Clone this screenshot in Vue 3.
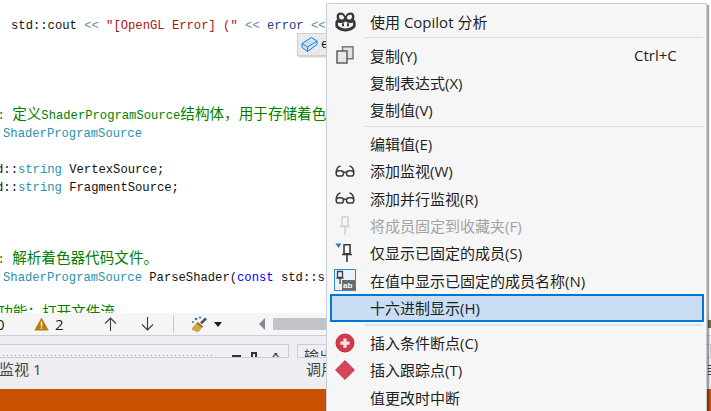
<script setup>
const code = [
  { top: 0, cls: 'lead', parts: [['std::cout ', ''], ['<< ', 'op'], ['"[OpenGL Error] ("', 'str'], [' ', ''], ['<< ', 'op'], ['error', 'var'], [' ', ''], ['<<', 'op']] },
  { gap: 4, cls: 'colon', parts: [[': ', 'com'], ['定义', 'com cjk'], ['ShaderProgramSource', 'com'], ['结构体，用于存储着色', 'com cjk']] },
  { cls: 'type', parts: [['ShaderProgramSource', 'ty']] },
  { gap: 1, cls: 'std', parts: [['std::', ''], ['string', 'ty'], [' VertexSource;', '']] },
  { cls: 'std', parts: [['std::', ''], ['string', 'ty'], [' FragmentSource;', '']] },
  { gap: 3, cls: 'colon', parts: [[': ', 'com'], ['解析着色器代码文件。', 'com cjk']] },
  { cls: 'type', parts: [['ShaderProgramSource', 'ty'], [' ParseShader(', ''], ['const', 'kw'], [' std::s', '']] },
  { gap: 1, cls: 'func', parts: [['功能：打开文件流', 'com cjk']] }
]

const menu = [
  { t: '使用 Copilot 分析', i: 'copilot' },
  { sep: true },
  { t: '复制(Y)', i: 'copy', k: 'Ctrl+C' },
  { t: '复制表达式(X)' },
  { t: '复制值(V)' },
  { sep: true },
  { t: '编辑值(E)' },
  { t: '添加监视(W)', i: 'glasses' },
  { t: '添加并行监视(R)', i: 'glasses' },
  { t: '将成员固定到收藏夹(F)', i: 'pin', off: true },
  { t: '仅显示已固定的成员(S)', i: 'pinfilter' },
  { t: '在值中显示已固定的成员名称(N)', i: 'pinab' },
  { t: '十六进制显示(H)', on: true },
  { sep: true, wide: true },
  { t: '插入条件断点(C)', i: 'bpcond' },
  { t: '插入跟踪点(T)', i: 'bptrace' },
  { t: '值更改时中断' }
]
</script>

<template>
  <div class="root">
    <div class="editor">
      <div
        v-for="(line, n) in code"
        :key="n"
        class="line"
        :class="[line.cls, line.gap ? 'gap' + line.gap : '']"
      >
        <span v-for="(p, m) in line.parts" :key="m" :class="p[1]">{{ p[0] }}</span>
      </div>
    </div>

    <div class="toolbar">
      <span class="num zero">0</span>
      <svg class="warn" width="15" height="14" viewBox="0 0 15 14">
        <path d="M7.5 .5 14.8 13.5H.2Z" fill="#b57f0c" />
        <path d="M6.8 4.5h1.4v5H6.8zM6.8 10.4h1.4v1.5H6.8z" fill="#fff" />
      </svg>
      <span class="num">2</span>
      <svg class="up" width="13" height="14" viewBox="0 0 13 14" fill="none" stroke="#3c3c3c" stroke-width="1.1">
        <path d="M6.5 14V1M1 6.5 6.5 1 12 6.5" />
      </svg>
      <svg class="down" width="13" height="14" viewBox="0 0 13 14" fill="none" stroke="#3c3c3c" stroke-width="1.1">
        <path d="M6.5 0V13M1 7.5 6.5 13 12 7.5" />
      </svg>
      <span class="divider"></span>
      <svg class="broom" width="18" height="17" viewBox="0 0 18 17">
        <path d="M9 6.5 14 1.5l2 1.8-5 5Z" fill="#555" />
        <path d="M6.5 6 12 10.5 8.5 15 6 16.5 5 15l-1 .8L2.5 14l-.8.6L.6 13l1.6-2.5Z" fill="#d0a848" />
        <path d="M6.5 6 12 10.5l-1 1.2L5.6 7.2Z" fill="#8a6a20" />
        <circle cx="5" cy="3" r="1.3" fill="#1e7ec8" />
        <circle cx="9" cy="1.6" r="1.1" fill="#1e7ec8" />
        <circle cx="2" cy="6" r="1" fill="#1e7ec8" />
      </svg>
      <span class="caret"></span>
      <span class="scroll-arrow"></span>
      <span class="thumb"></span>
      <span class="far-mark"></span>
    </div>

    <div class="panels">
      <div class="pane-row">
        <div class="pane first">
          <span class="dots"></span>
          <span class="win-btn min"></span>
          <span class="win-btn pin-btn"></span>
          <span class="win-x">✕</span>
        </div>
        <div class="pane second"><span class="pane-title">输出</span></div>
      </div>
      <div class="tab-row">
        <span class="tab watch">监视 1</span>
        <span class="tab stack">调用</span>
        <span class="far-lines"></span>
      </div>
    </div>

    <div class="status"></div>

    <div class="chip">
      <svg width="17" height="17" viewBox="0 0 17 17" fill="#cfe3f5" stroke="#1e7ec8" stroke-width="1" stroke-linejoin="round">
        <path d="M1 7.5 10.5 1.5 16 5v3.5L6.5 15.5 1 11.5Z" />
        <path d="M1 7.5 6.500 11 16 5M6.500 11v4.500" fill="none" />
      </svg>
      <span class="chip-text">e</span>
    </div>

    <div class="menu">
      <template v-for="(item, n) in menu" :key="n">
        <div v-if="item.sep" class="sep" :class="{ wide: item.wide }"></div>
        <div v-else class="row" :class="{ off: item.off, on: item.on }">
          <span class="ico">
            <svg v-if="item.i === 'copilot'" width="21" height="20" viewBox="0 0 21 20">
              <path d="M10.5 4.2C9.4 1.6 7.6.6 5.4.6 2.8.6 1.600 2.400 1.600 4.800c0 1 .2 1.800.6 2.500C1 8.200.4 9.400.4 11v3.300C.4 16 4.800 19.400 10.500 19.400S20.600 16 20.600 14.300V11c0-1.600-.6-2.800-1.800-3.700.4-.7.6-1.500.6-2.500 0-2.400-1.200-4.200-3.800-4.200-2.200 0-4 1-5.100 3.600Z" fill="#383838" />
              <path d="M4 4.300c0-1 .6-1.600 1.800-1.600 1.600 0 3 .8 3.200 3 .1 1-.8 1.900-2.600 1.900C4.800 7.600 4 6.300 4 4.300ZM17 4.300c0-1-.6-1.600-1.800-1.600-1.600 0-3 .8-3.200 3-.1 1 .8 1.900 2.600 1.900 1.600 0 2.400-1.300 2.400-3.300Z" fill="#f6f6f6" />
              <path d="M3 10.500c2.500 1 5 .6 7.500-1 2.500 1.600 5 2 7.500 1v3c-2 2-4.500 3-7.500 3s-5.500-1-7.500-3Z" fill="#f6f6f6" />
              <rect x="7" y="11" width="2" height="3.500" rx="1" fill="#383838" />
              <rect x="12" y="11" width="2" height="3.500" rx="1" fill="#383838" />
            </svg>
            <svg v-else-if="item.i === 'copy'" width="18" height="18" viewBox="0 0 18 18" stroke-width="1.500">
              <rect x="6.500" y=".8" width="10.500" height="12" fill="#e2e2e2" stroke="#777" />
              <rect x="1" y="5" width="10" height="12" fill="#e8e8e8" stroke="#5e5e5e" />
            </svg>
            <svg v-else-if="item.i === 'glasses'" width="20" height="12" viewBox="0 0 20 12" fill="none" stroke="#3c3c3c" stroke-width="1.500">
              <rect x="1.200" y="5.800" width="7.300" height="5.200" rx="2.600" />
              <rect x="11.500" y="5.800" width="7.300" height="5.200" rx="2.600" />
              <path d="M8.500 7.200h3M1.200 7.500C1.500 4 3 1.500 5.500 1M18.800 7.500C18.500 4 17 1.500 14.500 1" />
            </svg>
            <svg v-else-if="item.i === 'pin'" width="12" height="19" viewBox="0 0 12 19" fill="none" stroke="#d8d8d8" stroke-width="1.800">
              <path d="M3 1h6v9H3zM1 10.500h10M6 10.500V19" />
            </svg>
            <svg v-else-if="item.i === 'pinfilter'" width="20" height="20" viewBox="0 0 20 20" fill="none" stroke="#3c3c3c" stroke-width="1.600">
              <path d="M.5 .5h6L3.500 5Z" fill="#1e7ec8" stroke="none" />
              <path d="M9 1.800h6v9H9zM7 11.500h10M12 11.500V19" />
            </svg>
            <svg v-else-if="item.i === 'pinab'" width="22" height="22" viewBox="0 0 22 22">
              <rect x=".5" y=".5" width="21" height="21" fill="#e9f1fb" stroke="#2f86d6" />
              <path d="M3.500 2.500h5v6h-5zM2.500 9h7M6 9v6" fill="none" stroke="#3c3c3c" stroke-width="1.300" />
              <rect x="8" y="11" width="13" height="10" fill="#6a6a6a" />
              <text x="9" y="19.200" class="ab">ab</text>
            </svg>
            <svg v-else-if="item.i === 'bpcond'" width="20" height="20" viewBox="0 0 20 20">
              <circle cx="10" cy="10" r="9" fill="#d13a4c" stroke="#c02a3d" />
              <path d="M8.400 5.500h3.200v3h3v3.200h-3v3H8.400v-3h-3V8.500h3Z" fill="#f3e3e6" />
            </svg>
            <svg v-else-if="item.i === 'bptrace'" width="20" height="20" viewBox="0 0 20 20">
              <path d="M10 .6 19.400 10 10 19.400 .6 10Z" fill="#d6455a" stroke="#c5344a" />
            </svg>
          </span>
          <span class="label">{{ item.t }}</span>
          <span v-if="item.k" class="key">{{ item.k }}</span>
        </div>
      </template>
    </div>
  </div>
</template>

<style scoped>
.root {
  position: relative;
  width: 711px;
  height: 411px;
  overflow: hidden;
  display: flex;
  flex-direction: column;
  background: #fff;
  font-family: "Open Sans", "Noto Sans CJK SC", sans-serif;
}

.editor {
  height: 313px;
  flex: none;
  overflow: hidden;
  padding: 17px 0 0;
  box-sizing: border-box;
  background: #fff;
  font-family: "Liberation Mono", "Noto Sans CJK SC", monospace;
  font-size: 12.2px;
}
.line { height: 18px; line-height: 18px; white-space: pre; color: #111; }
.lead { margin-left: 11px; }
.colon { margin-left: -2.5px; }
.type { margin-left: 3px; }
.std { margin-left: -18.600px; }
.func { margin-left: -1.800px; }
.gap1 { margin-top: 18px; }
.gap3 { margin-top: 54px; }
.gap4 { margin-top: 72px; }
.com { color: #008000; }
.cjk { font-size: 14.600px; font-family: "Noto Sans CJK SC", sans-serif; font-weight: 400; line-height: 0; }
.ty { color: #2b91af; }
.str { color: #a31515; }
.op { color: #5f8fa8; }
.var { color: #1f377f; }
.kw { color: #0000ff; }

.toolbar {
  height: 23px;
  flex: none;
  box-sizing: border-box;
  display: flex;
  align-items: center;
  background: #f5f5f5;
  border-bottom: 1px solid #ccceDB;
  font-size: 15px;
  color: #1e1e1e;
}
.num { line-height: 20px; }
.zero { margin-left: -4px; width: 38px; }
.warn { margin-right: 6px; }
.up { margin-left: 40px; }
.down { margin-left: 24px; }
.divider { width: 1px; height: 18px; margin-left: 19px; background: #c6c6cc; }
.broom { margin-left: 17px; }
.caret {
  margin-left: 5px;
  width: 0;
  height: 0;
  border-left: 4.500px solid transparent;
  border-right: 4.500px solid transparent;
  border-top: 5px solid #1e1e1e;
}
.scroll-arrow {
  margin-left: 37px;
  width: 0;
  height: 0;
  border-top: 6px solid transparent;
  border-bottom: 6px solid transparent;
  border-right: 6px solid #85878f;
}
.thumb { margin-left: 8px; width: 60px; height: 12px; background: #c2c3c9; }
.far-mark { margin-left: auto; width: 3px; height: 8px; background: #7a6a4a; }

.panels {
  height: 53px;
  flex: none;
  box-sizing: border-box;
  padding-top: 8px;
  background: #eeeef2;
}
.pane-row { display: flex; height: 14px; gap: 8px; }
.pane {
  box-sizing: border-box;
  height: 14px;
  border: 1px solid #ccced8;
  overflow: hidden;
  position: relative;
  background: #f0f0f4;
}
.first { width: 291px; margin-left: -2px; display: flex; align-items: flex-end; flex: none; }
.second { flex: 1; padding-left: 6px; }
.pane-title { display: block; font-size: 15px; line-height: 22px; color: #444; }
.dots {
  width: 215px;
  height: 1px;
  margin-bottom: 1px;
  background-image: linear-gradient(to right, #9a9aa4 1px, transparent 1px);
  background-size: 4px 1px;
}
.win-btn { background: #333; }
.min { width: 9px; height: 2px; margin-left: 18px; }
.pin-btn { width: 6px; height: 5px; margin-left: 10px; background: none; border: 2px solid #333; border-bottom: 0; box-sizing: border-box; }
.win-x { margin-left: 14px; font-size: 11px; line-height: 4px; height: 4px; overflow: hidden; color: #333; font-family: "DejaVu Sans", sans-serif; }

.tab-row { display: flex; align-items: center; height: 23px; font-size: 15px; color: #444; }
.tab { line-height: 23px; white-space: nowrap; }
.watch { margin-left: -1px; width: 307px; flex: none; }
.far-lines {
  margin-left: auto;
  width: 3px;
  height: 10px;
  background-image: linear-gradient(#444 1px, transparent 1px);
  background-size: 3px 3px;
}

.status { height: 22px; flex: none; background: #ca5100; }

.chip {
  position: absolute;
  left: 297px;
  top: 33px;
  width: 40px;
  height: 23px;
  box-sizing: border-box;
  border: 1px solid #cfcfd6;
  background: #e9e9ee;
  box-shadow: 1px 1px 2px rgba(0, 0, 0, 0.25);
  display: flex;
  align-items: center;
  gap: 3px;
  padding-left: 3px;
  font-family: "Liberation Mono", monospace;
  font-size: 12.200px;
  color: #111;
}
.chip-text { line-height: 18px; }

.menu {
  position: absolute;
  left: 326px;
  top: 3px;
  width: 381px;
  height: 420px;
  box-sizing: border-box;
  padding: 4px 3px 0;
  background: #f6f6f6;
  border: 1px solid #ccced8;
  box-shadow: 2px 2px 1px rgba(0, 0, 0, 0.35);
  font-size: 15px;
  color: #1e1e1e;
}
.row {
  position: relative;
  display: flex;
  align-items: center;
  height: 27.400px;
  box-sizing: border-box;
  margin-right: -1px;
  border: 1px solid transparent;
}
.row.on {
  background: #c9def5;
  border: 2px solid #0078d4;
  height: 28px;
}
.row.off { color: #a2a4a5; }
.row.on .ico { margin-left: -1px; }
.ico {
  flex: none;
  width: 28px;
  margin-right: 11px;
  height: 22px;
  display: flex;
  align-items: center;
  justify-content: center;
}
.label { white-space: nowrap; line-height: 20px; margin-top: 1px; }
.key { position: absolute; left: 303px; line-height: 20px; }
.sep { height: 1px; margin: 2px 0 3px 35px; background: #dcdce0; }
.sep.wide { margin-top: 2px; margin-bottom: 3px; height: 2px; background: #dfe3e8; }
.ab { font-family: "Liberation Sans", sans-serif; font-size: 8px; font-weight: 700; fill: #fff; }
</style>
